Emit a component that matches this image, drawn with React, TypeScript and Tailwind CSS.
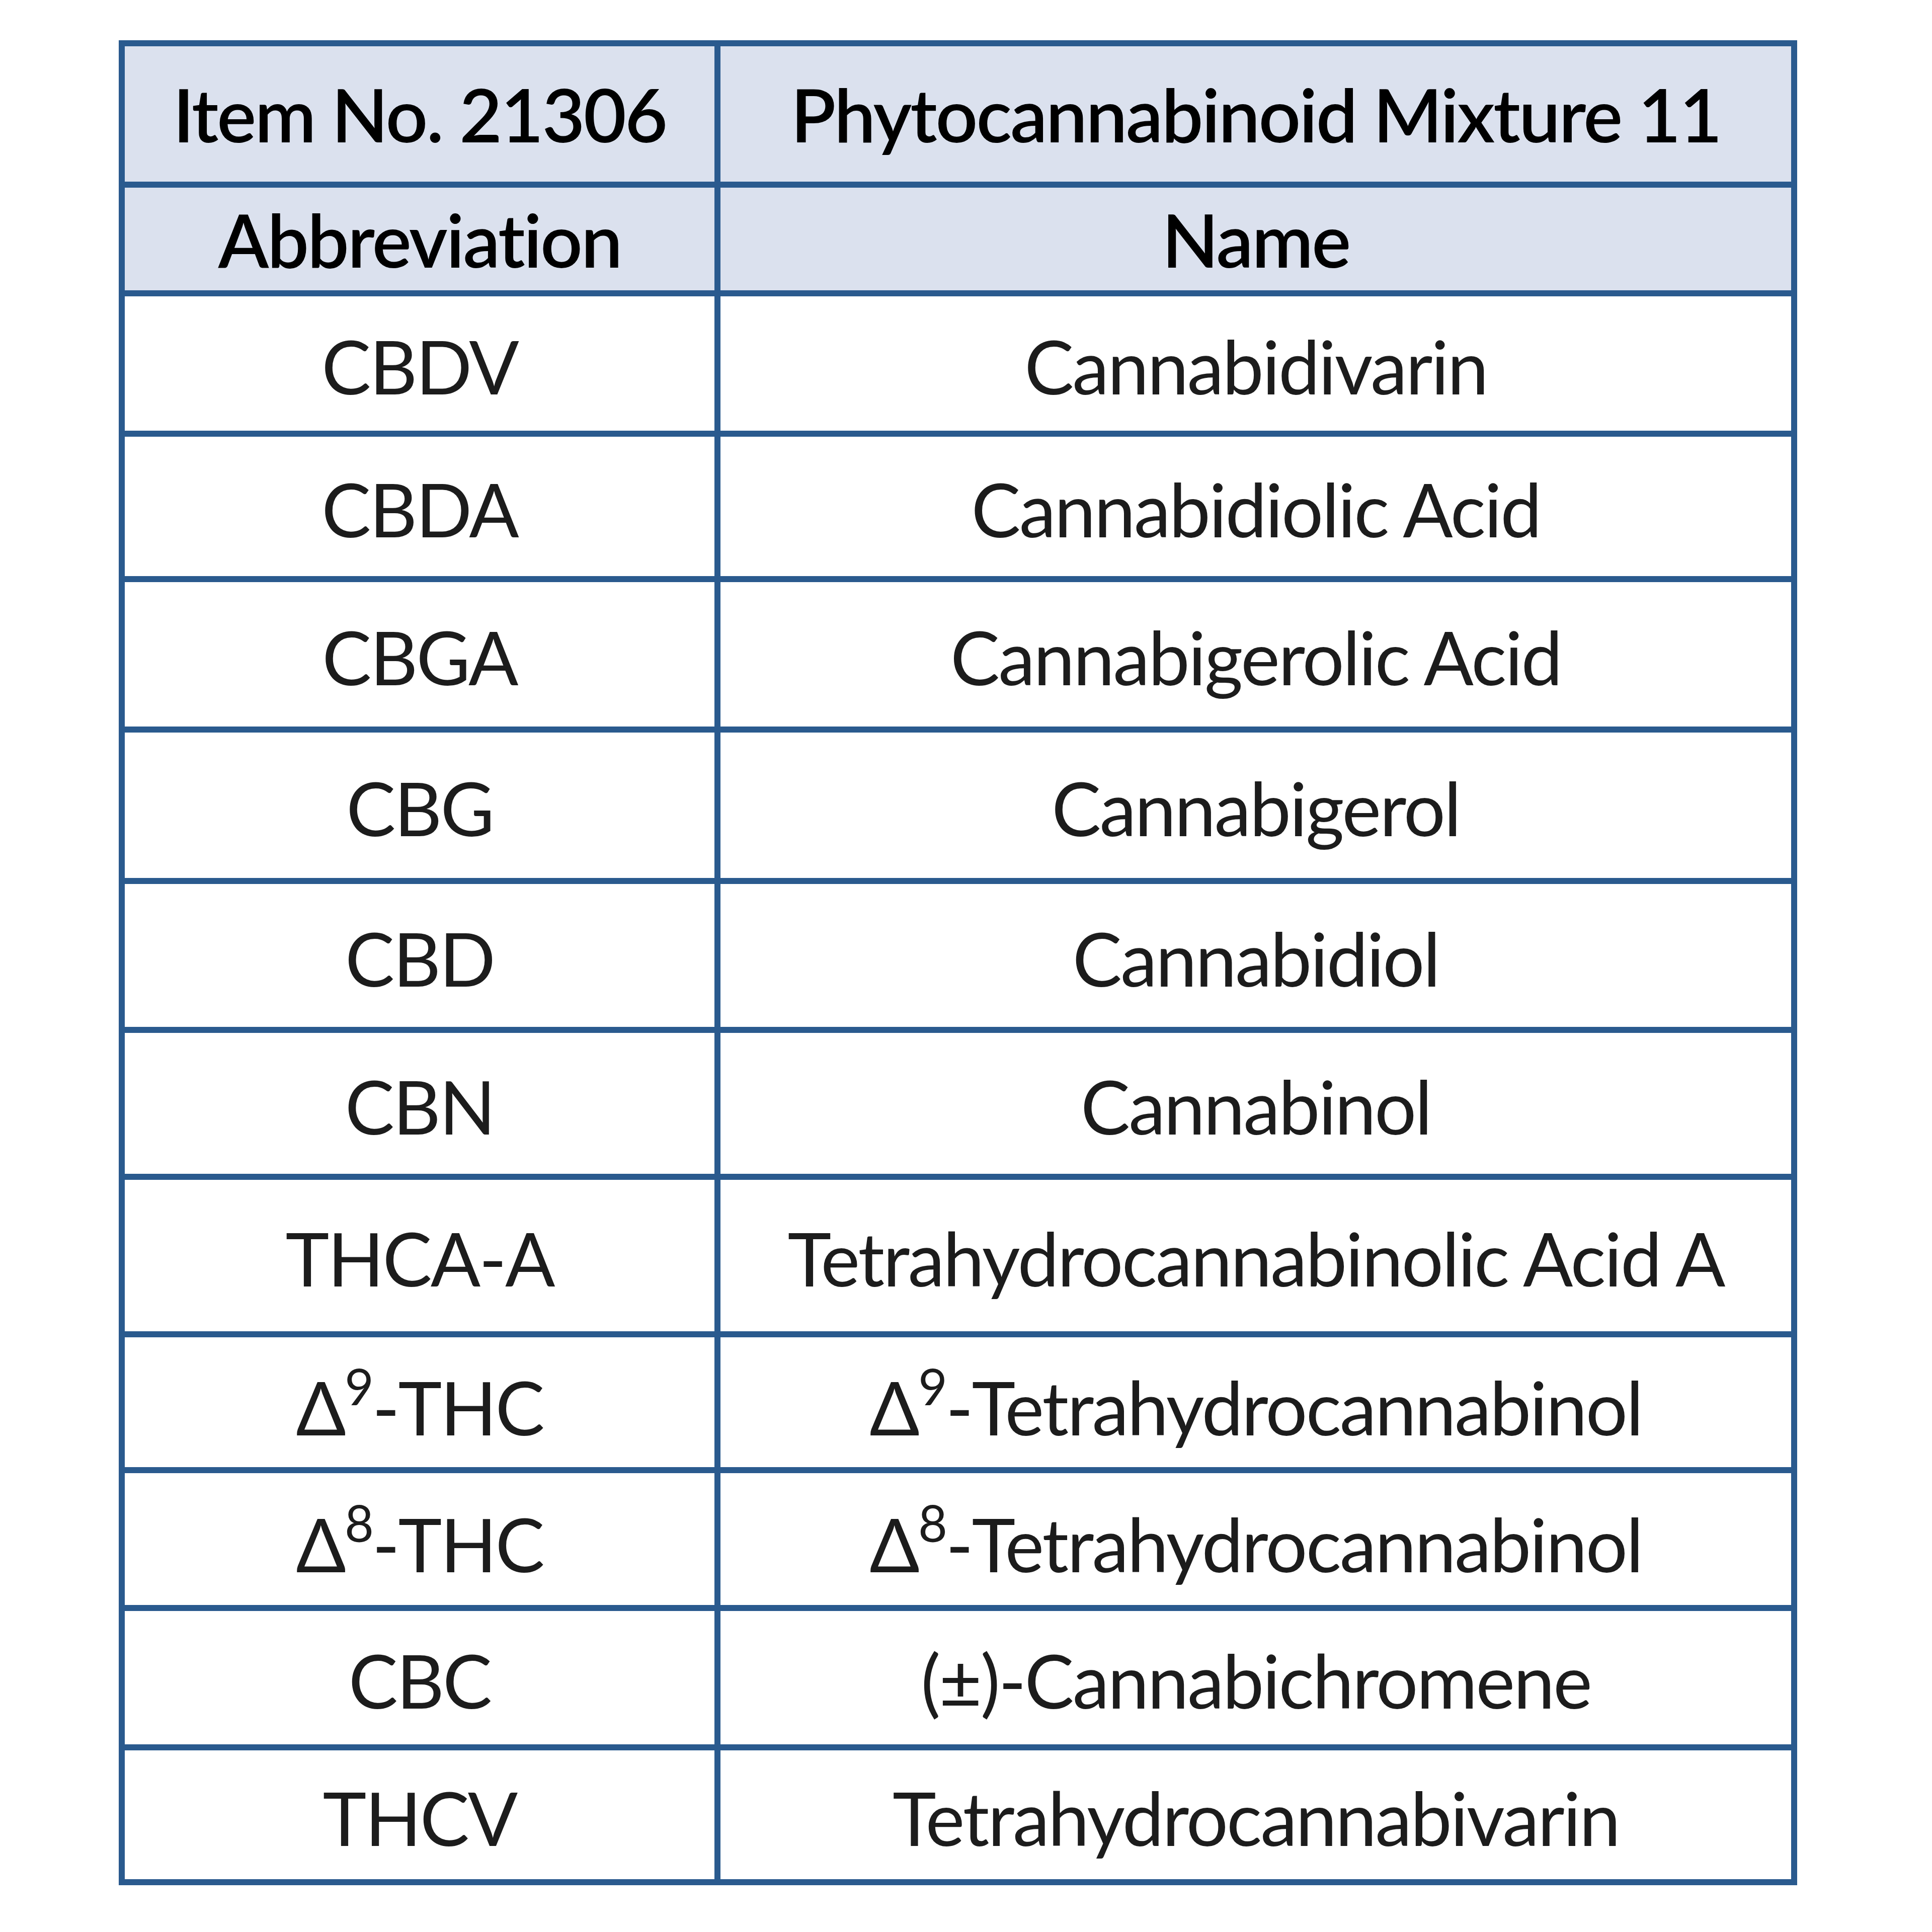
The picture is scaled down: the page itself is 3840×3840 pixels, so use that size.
import React from 'react';

type Row = { abbr: React.ReactNode; name: React.ReactNode; h: string };

const Delta = ({ n }: { n: string }) => (
  <>
    Δ<sup className="relative top-[-10px] text-[100px] align-super leading-none">{n}</sup>
  </>
);

const rows: Row[] = [
  { abbr: 'CBDV', name: 'Cannabidivarin', h: 'h-[267px]' },
  { abbr: 'CBDA', name: 'Cannabidiolic Acid', h: 'h-[277px]' },
  { abbr: 'CBGA', name: 'Cannabigerolic Acid', h: 'h-[287px]' },
  { abbr: 'CBG', name: 'Cannabigerol', h: 'h-[289px]' },
  { abbr: 'CBD', name: 'Cannabidiol', h: 'h-[284px]' },
  { abbr: 'CBN', name: 'Cannabinol', h: 'h-[280px]' },
  { abbr: 'THCA-A', name: 'Tetrahydrocannabinolic Acid A', h: 'h-[301px]' },
  {
    abbr: <><Delta n="9" />-THC</>,
    name: <><Delta n="9" />-Tetrahydrocannabinol</>,
    h: 'h-[258px]',
  },
  {
    abbr: <><Delta n="8" />-THC</>,
    name: <><Delta n="8" />-Tetrahydrocannabinol</>,
    h: 'h-[262px]',
  },
  { abbr: 'CBC', name: '(±)-Cannabichromene', h: 'h-[265px]' },
  { abbr: 'THCV', name: 'Tetrahydrocannabivarin', h: 'h-[256px]' },
];

const App = () => {
  return (
    <div className="min-h-screen bg-white pl-[236px] pt-[80px] font-['Lato','Liberation_Sans',sans-serif]">
      <div className="inline-flex flex-col gap-[12px] bg-[#2a5a8e] p-[12px]">
        <div className="flex gap-[12px] h-[269px]">
          <div className="flex w-[1172px] items-center justify-center bg-[#dbe1ee] text-[147px] tracking-[-3px] font-semibold text-black">
            Item No. 21306
          </div>
          <div className="flex w-[2128px] items-center justify-center bg-[#dbe1ee] text-[147px] tracking-[-3px] font-semibold text-black">
            Phytocannabinoid Mixture 11
          </div>
        </div>
        <div className="flex gap-[12px] h-[204px]">
          <div className="flex w-[1172px] items-center justify-center bg-[#dbe1ee] text-[147px] tracking-[-3px] font-semibold text-black">
            Abbreviation
          </div>
          <div className="flex w-[2128px] items-center justify-center bg-[#dbe1ee] text-[147px] tracking-[-3px] font-semibold text-black">
            Name
          </div>
        </div>
        {rows.map((row, i) => (
          <div key={i} className={`flex gap-[12px] ${row.h}`}>
            <div className="flex w-[1172px] items-center justify-center bg-white pt-[10px] text-[147px] tracking-[-3px] text-[#1c1c1c]">
              <span className="leading-none">{row.abbr}</span>
            </div>
            <div className="flex w-[2128px] items-center justify-center bg-white pt-[10px] text-[147px] tracking-[-3px] text-[#1c1c1c]">
              <span className="leading-none">{row.name}</span>
            </div>
          </div>
        ))}
      </div>
    </div>
  );
};

export default App;
